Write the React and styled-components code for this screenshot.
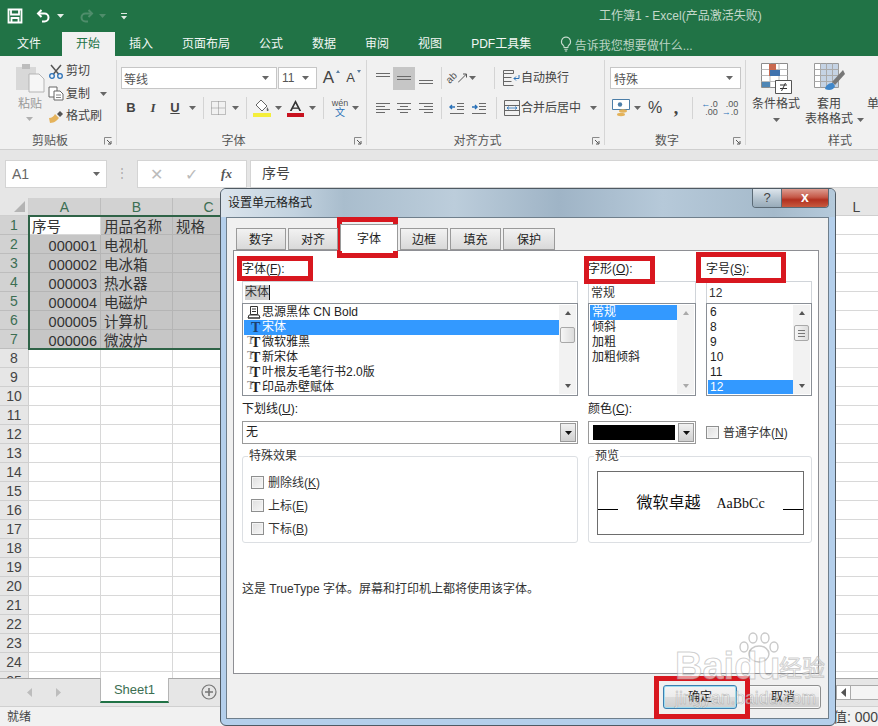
import React from "react";
import styled, { createGlobalStyle } from "styled-components";

const GlobalStyle = createGlobalStyle`
  html, body { margin: 0; padding: 0; background: #fff; }
  body {
    font-family: "Liberation Sans", "Noto Sans CJK SC", sans-serif;
    font-size: 12px;
  }
  * { box-sizing: border-box; }
`;

const GREEN = "#217346";

/* ---------- icons ---------- */

const Caret = ({ color = "#666" }) => (
  <svg width="7" height="4" viewBox="0 0 7 4"><path d="M0 0h7L3.500 4z" fill={color} /></svg>
);

const SideArrow = ({ dir, color }) => (
  <svg width="5" height="9" viewBox="0 0 5 9">
    <path d={dir === "left" ? "M5 0v9L0 4.500z" : "M0 0v9l5-4.500z"} fill={color} />
  </svg>
);

const SaveIcon = () => (
  <svg width="16" height="16" viewBox="0 0 16 16" fill="none" stroke="#fff" strokeWidth="1.8">
    <path d="M1.500 1.500h13v13h-13z" />
    <path d="M4 1.500v5h8v-5M4.500 14.500v-4.500h7v4.500" />
  </svg>
);

const UndoIcon = ({ color = "#fff" }) => (
  <svg width="16" height="14" viewBox="0 0 16 14" fill="none" stroke={color} strokeWidth="2">
    <path d="M5.500 1 2 4.500 5.500 8" />
    <path d="M2.500 4.500h6a4 4 0 0 1 0 8H6" />
  </svg>
);

const RedoIcon = ({ color }) => (
  <svg width="16" height="14" viewBox="0 0 16 14" fill="none" stroke={color} strokeWidth="2">
    <path d="M10.500 1 14 4.500 10.500 8" />
    <path d="M13.500 4.500h-6a4 4 0 0 0 0 8H10" />
  </svg>
);

const CustomizeIcon = () => (
  <svg width="8" height="8" viewBox="0 0 8 8" fill="#dfeae3">
    <path d="M1 1h6v1H1zM1 4h6L4 7.500z" />
  </svg>
);

const BulbIcon = () => (
  <svg width="12" height="16" viewBox="0 0 12 16" fill="none" stroke="#c9dcd0" strokeWidth="1.100">
    <path d="M6 1a4.600 4.600 0 0 0-2.800 8.200c.7.6.9 1.400.9 2.300h3.800c0-.9.2-1.700.9-2.300A4.600 4.600 0 0 0 6 1z" />
    <path d="M4.300 13.300h3.400M4.900 15h2.200" />
  </svg>
);

const PasteIcon = () => (
  <svg width="30" height="30" viewBox="0 0 30 30">
    <path d="M1 4h20v23H1z" fill="#d8d8d8" />
    <path d="M7 1h8v5H7z" fill="#bdbdbd" />
    <path d="M14 11h10l5 5v13H14z" fill="#f6f6f6" stroke="#b5b5b5" />
  </svg>
);

const ScissorsIcon = () => (
  <svg width="16" height="15" viewBox="0 0 16 15" fill="none">
    <path d="M3 1l7.500 9M13 1L5.500 10" stroke="#555" strokeWidth="1.500" />
    <circle cx="4" cy="12" r="2.300" stroke="#2a71b8" strokeWidth="1.300" />
    <circle cx="12" cy="12" r="2.300" stroke="#2a71b8" strokeWidth="1.300" />
  </svg>
);

const CopyIcon = () => (
  <svg width="16" height="15" viewBox="0 0 16 15" fill="#fff" stroke="#666">
    <path d="M1 1h8v10H1z" />
    <path d="M6 5h6l3 3v6H6z" />
    <path d="M8 9h5M8 11.500h5" strokeWidth=".8" />
  </svg>
);

const BrushIcon = () => (
  <svg width="17" height="15" viewBox="0 0 17 15">
    <path d="M1 9c3 0 5-2 6-4l4 4c-2 2-4 5-9 5z" fill="#e5b35c" />
    <path d="M8 4l3-3 3 3-3 3z" fill="#555" transform="translate(1 1)" />
  </svg>
);

const Launcher = () => (
  <svg width="8" height="8" viewBox="0 0 8 8" fill="none" stroke="#8a8a8a">
    <path d="M.5 7.500v-7h7" />
    <path d="M3 3l3.500 3.500M7 4v3H4" stroke="#555" />
  </svg>
);

const BorderIcon = () => (
  <svg width="15" height="14" viewBox="0 0 15 14" fill="none" stroke="#8a8a8a" strokeDasharray="1 1">
    <path d="M.5.5h14v13H.5zM7.500.5v13M.5 7h14" />
  </svg>
);

const FillIcon = () => (
  <svg width="18" height="18" viewBox="0 0 18 18">
    <path d="M8 1l6 6-5 5-6-6z" fill="#fff" stroke="#666" />
    <path d="M14 8c1 1.500 2 2.500 1.500 3.500s-2 .5-1.800-.8z" fill="#666" />
    <path d="M0 14h18v4H0z" fill="#f4ee3b" />
  </svg>
);

const FontColorIcon = () => (
  <svg width="17" height="18" viewBox="0 0 17 18">
    <path d="M2.800 12 8.500 1l5.700 11h-1.900L8.500 4.500 4.700 12z" fill="#333" />
    <path d="M5.500 8.500h6v1.300h-6z" fill="#333" />
    <path d="M0 14h17v4H0z" fill="#c8121f" />
  </svg>
);

// horizontal text lines used by the alignment and indent buttons
const TextLines = ({ lines, extra }) => (
  <svg width="16" height="14" viewBox="0 0 16 14" stroke="#6a6a6a" strokeWidth="1" fill="none">
    {lines.map(([a, b, y]) => (
      <path key={y} d={`M${a} ${y}.5H${b}`} />
    ))}
    {extra}
  </svg>
);

const OrientArrow = () => (
  <svg width="10" height="10" viewBox="0 0 10 10" fill="none" stroke="#555">
    <path d="M0 9.500 8.500 1M5 1h3.500v3.500" />
  </svg>
);

const WrapIcon = () => (
  <svg width="17" height="17" viewBox="0 0 17 17" fill="none" stroke="#666">
    <path d="M.5.500h10v3H.5zM.5 7.500h8M.5 11.500h8M.5 15.500h10M.5 3.500v12" />
    <path d="M16 5v3.500h-5M13 6.500l-2 2 2 2" stroke="#2a71b8" />
  </svg>
);

const MergeIcon = () => (
  <svg width="16" height="16" viewBox="0 0 16 16" fill="none" stroke="#666">
    <path d="M.5.500h15v15H.5zM.5 5.500h15M.5 10.500h15" />
    <path d="M3 8h10M5 6.500 3 8l2 1.500M11 6.500 13 8l-2 1.500" stroke="#2a71b8" strokeWidth=".8" />
  </svg>
);

const CurrencyIcon = () => (
  <svg width="18" height="18" viewBox="0 0 18 18">
    <path d="M.5.500h17v10H.5z" fill="#fff" stroke="#4c7ea8" />
    <circle cx="8" cy="5.500" r="2.200" fill="#4c7ea8" />
    <ellipse cx="11" cy="12" rx="4" ry="1.700" fill="#e3b25a" />
    <ellipse cx="9" cy="15.500" rx="4" ry="1.700" fill="#e3b25a" />
  </svg>
);

const CondFormatIcon = () => (
  <svg width="31" height="31" viewBox="0 0 31 31">
    <path d="M.5.500h26v24H.5z" fill="#fff" stroke="#8c8c8c" />
    <path d="M9 .5v24M18 .5v24M.5 6.500h26M.5 12.500h26M.5 18.500h26" stroke="#bbb" />
    <path d="M8 1h7v6H8zM8 7h4v6H8z" fill="#c9694f" />
    <path d="M9 7h10v6H9z" fill="#3f72ad" />
    <path d="M1 19h8v5H1z" fill="#4f86b5" />
    <path d="M14.500 17.500h16v13h-16z" fill="#fff" stroke="#555" />
    <path d="M19 22h7M19 25.500h7M24.500 20l-4 8" stroke="#333" fill="none" />
  </svg>
);

const TableFormatIcon = () => (
  <svg width="31" height="31" viewBox="0 0 31 31">
    <path d="M.5.500h24v24H.5z" fill="#fff" stroke="#999" />
    <path d="M6 1h18v23H6z" fill="#c5d3e4" />
    <path d="M.5 6.500h24M.5 12.500h24M.5 18.500h24M6.500.5v24M12.500.5v24M18.500.5v24" stroke="#aaa" />
    <path d="M29 7 18 19l3 3L31 11z" fill="#777" />
    <path d="M11 26c1-5 5-6 8-6l2 3c-1 4-6 5-10 3z" fill="#3f86c9" />
  </svg>
);

const GridCornerIcon = () => (
  <svg width="11" height="11" viewBox="0 0 11 11"><path d="M11 0v11H0z" fill="#b4b4b4" /></svg>
);

const PlusIcon = () => (
  <svg width="16" height="16" viewBox="0 0 16 16" fill="none" stroke="#777">
    <circle cx="8" cy="8" r="7" strokeWidth="1.200" />
    <path d="M8 4v8M4 8h8" strokeWidth="1.600" />
  </svg>
);

const FontFileIcon = () => (
  <svg width="14" height="13" viewBox="0 0 14 13" fill="none" stroke="#333">
    <path d="M3.500.5h7v8h-7zM1 12h12M2 9h10l1 3H1zM5 3h4M5 5.500h4" />
  </svg>
);

const PawIcon = () => (
  <svg width="42" height="32" viewBox="0 0 42 32" fill="none" stroke="#c9c9c9" strokeWidth="1.400">
    <ellipse cx="21" cy="22" rx="10" ry="8" />
    <ellipse cx="6" cy="15" rx="4" ry="5" />
    <ellipse cx="15" cy="6" rx="4" ry="5" />
    <ellipse cx="27" cy="6" rx="4" ry="5" />
    <ellipse cx="36" cy="15" rx="4" ry="5" />
  </svg>
);

/* ---------- window chrome ---------- */

const Page = styled.div`
  position: relative;
  width: 878px;
  height: 726px;
  overflow: hidden;
  display: flex;
  flex-direction: column;
  color: #444;
`;

const TitleBar = styled.div`
  height: 30px;
  background: ${GREEN};
  display: flex;
  align-items: center;
  padding: 2px 0 0 7px;
`;

const QuickBtn = styled.span`
  display: flex;
  align-items: center;
  justify-content: center;
  width: ${(p) => p.$w}px;
  margin-right: ${(p) => p.$mr || 0}px;
`;

const WindowTitle = styled.div`
  position: absolute;
  left: 599px;
  top: 8px;
  line-height: 16px;
  color: #c3d8ca;
  white-space: nowrap;
`;

const MenuBar = styled.div`
  height: 26px;
  background: ${GREEN};
  display: flex;
  align-items: flex-end;
  padding-left: 2.500px;
`;

const MenuTab = styled.div`
  height: 24px;
  padding: 0 14.500px;
  line-height: 24px;
  white-space: nowrap;
  color: ${(p) => (p.$active ? GREEN : "#f2f7f4")};
  background: ${(p) => (p.$active ? "#f1f1f1" : "transparent")};
  margin-right: ${(p) => p.$mr || 0}px;
`;

const TellMe = styled.div`
  display: flex;
  align-items: center;
  gap: 3px;
  height: 24px;
  margin-left: 14px;
  color: #bcd3c4;
`;

/* ---------- ribbon ---------- */

const Ribbon = styled.div`
  height: 94px;
  background: #f1f1f1;
  border-bottom: 1px solid #cfcfcf;
  display: flex;
  overflow: hidden;
`;

const Group = styled.div`
  flex: none;
  width: ${(p) => p.$w}px;
  display: flex;
  flex-direction: column;
  border-right: ${(p) => (p.$last ? "none" : "1px solid #d6d6d6")};
  margin: 4px 0 4px;
`;

const GroupBody = styled.div`
  flex: none;
  height: 74px;
  display: ${(p) => (p.$row ? "flex" : "block")};
  padding: ${(p) => p.$pad || "7px 0 0 0"};
`;

const GroupFooter = styled.div`
  flex: 1;
  display: flex;
  align-items: center;
`;

const GroupLabel = styled.span`
  flex: 1;
  text-align: center;
  line-height: 14px;
  color: #555;
`;

const LauncherBox = styled.span`
  width: 16px;
  display: flex;
  padding-left: 4px;
`;

const ToolRow = styled.div`
  display: flex;
  align-items: center;
  height: 22px;
  padding-left: ${(p) => p.$pl || 0}px;
  margin-top: ${(p) => p.$mt || 0}px;
`;

const Tool = styled.span`
  flex: none;
  width: ${(p) => p.$w}px;
  height: ${(p) => (p.$active ? "23px" : "auto")};
  display: flex;
  align-items: center;
  justify-content: center;
  background: ${(p) => (p.$active ? "#c6c6c6" : "transparent")};
  color: #444;
  font: ${(p) => p.$font || "inherit"};
  line-height: 16px;
`;

const SizeTool = styled(Tool)`
  position: relative;
  &::after {
    content: "";
    position: absolute;
    top: 0;
    right: ${(p) => p.$arrowRight}px;
    border-left: 2.500px solid transparent;
    border-right: 2.500px solid transparent;
    ${(p) => (p.$shrink ? "border-top" : "border-bottom")}: 3px solid #5b7fa3;
  }
`;

const ToolSep = styled.span`
  flex: none;
  width: ${(p) => p.$w}px;
  height: 22px;
  display: flex;
  justify-content: center;
  &::before {
    content: "";
    width: 1px;
    background: #d4d4d4;
  }
`;

const ToolText = styled.span`
  white-space: nowrap;
  color: #444;
  line-height: 16px;
`;

const ComboBox = styled.div`
  flex: none;
  width: ${(p) => p.$w}px;
  height: 22px;
  background: #fff;
  border: 1px solid #c6c6c6;
  display: flex;
  align-items: center;
  justify-content: space-between;
  padding: 0 7px 0 ${(p) => p.$pl || 2}px;
  color: #555;
  margin-right: ${(p) => p.$mr || 0}px;
`;

const PasteButton = styled.div`
  width: 42px;
  padding-left: 4px;
  display: flex;
  flex-direction: column;
  align-items: center;
  color: #9a9a9a;
  line-height: 16px;
`;

const PasteLabel = styled.span`
  margin-top: 3px;
`;

const PasteCaret = styled.span`
  display: flex;
  margin-top: 5px;
`;

const SmallColumn = styled.div`
  margin-left: 0;
  margin-top: -3px;
  display: flex;
  flex-direction: column;
`;

const SmallAction = styled.div`
  height: 22.500px;
  display: flex;
  align-items: center;
`;

const ActionIcon = styled.span`
  width: 18px;
  display: flex;
`;

const BigButton = styled.div`
  flex: none;
  width: ${(p) => p.$w}px;
  display: flex;
  flex-direction: column;
  align-items: center;
  color: #444;
  line-height: 15px;
  white-space: nowrap;
`;

const BigIcon = styled.span`
  height: 33px;
  margin-bottom: 1px;
  display: flex;
`;

const BigCaret = styled.span`
  height: 15px;
  display: flex;
  align-items: center;
`;

const BigLine = styled.span`
  display: flex;
  align-items: center;
  & svg {
    margin: 0 -11px 0 4px;
  }
`;

const Wen = styled.span`
  display: flex;
  flex-direction: column;
  align-items: center;
  font-size: 9px;
  line-height: 9px;
  color: #555;
  & b {
    font-weight: 400;
    font-size: 10px;
    line-height: 9px;
    color: #2a71b8;
  }
`;

const OrientText = styled.span`
  display: block;
  transform: rotate(-45deg);
  font-size: 10px;
  line-height: 10px;
  color: #555;
`;

const TinyDigits = styled.span`
  display: flex;
  flex-direction: column;
  font-size: 9px;
  line-height: 8px;
  text-align: right;
  color: #555;
  & i {
    font-style: normal;
    color: #2a71b8;
  }
`;

/* ---------- formula bar ---------- */

const FormulaBar = styled.div`
  height: 48px;
  background: #e6e6e6;
  padding: 10px 0 10px 5px;
  display: flex;
`;

const NameBox = styled.div`
  width: 102px;
  background: #fff;
  border: 1px solid #d4d4d4;
  display: flex;
  align-items: center;
  justify-content: space-between;
  padding: 0 6px;
  font-size: 14px;
  color: #666;
`;

const Dots = styled.div`
  width: 30px;
  text-align: center;
  color: #aaa;
  line-height: 26px;
`;

const FormulaButtons = styled.div`
  width: 110px;
  background: #fff;
  border: 1px solid #d4d4d4;
  display: flex;
  align-items: center;
  padding-left: 1px;
`;

const FormulaBtn = styled.span`
  width: 35px;
  text-align: center;
  color: ${(p) => p.$color || "#bbb"};
  font: ${(p) => p.$font || "16px 'Liberation Sans', sans-serif"};
`;

const FormulaInput = styled.div`
  flex: 1;
  margin-left: 3px;
  background: #fff;
  border: 1px solid #d4d4d4;
  border-right: none;
  padding-left: 11px;
  font-size: 14px;
  line-height: 25px;
  color: #444;
`;

/* ---------- sheet ---------- */

const SheetWrap = styled.div`
  position: relative;
  flex: 1;
  overflow: hidden;
  background: #fff;
`;

const SheetGrid = styled.div`
  display: grid;
  grid-template-columns: 29px repeat(12, 72px);
  grid-template-rows: 18px repeat(25, 19px);
`;

const HeaderCell = styled.div`
  background: ${(p) => (p.$selected ? "#d2d2d2" : "#e6e6e6")};
  color: ${(p) => (p.$selected ? "#3c6e52" : "#444")};
  border-right: 1px solid ${(p) => (p.$selected ? "#bdbdbd" : "#cfcfcf")};
  border-bottom: 1px solid ${(p) => (p.$selected ? "#bdbdbd" : "#cfcfcf")};
  display: flex;
  align-items: center;
  justify-content: center;
  font-size: 14px;
`;

const CornerCell = styled(HeaderCell)`
  align-items: flex-end;
  justify-content: flex-end;
  padding: 0 3px 3px 0;
`;

const Cell = styled.div`
  border-right: 1px solid ${(p) => (p.$selected ? "#b5b5b5" : "#d8d8d8")};
  border-bottom: 1px solid ${(p) => (p.$selected ? "#b5b5b5" : "#d8d8d8")};
  background: ${(p) => (p.$selected ? "#c6c6c6" : "#fff")};
  font-size: 14.500px;
  line-height: 22px;
  padding: 0 3px;
  color: #333;
  white-space: nowrap;
  text-align: ${(p) => (p.$right ? "right" : "left")};
`;

const SelectionFrame = styled.div`
  position: absolute;
  left: 28px;
  top: 17px;
  width: 290px;
  height: 135px;
  border: 2px solid #2f6347;
  pointer-events: none;
`;

const SheetBar = styled.div`
  height: 28px;
  background: #e6e6e6;
  border-top: 1px solid #a8a8a8;
  display: flex;
  padding-left: 15px;
`;

const SheetNav = styled.span`
  width: 29px;
  height: 26px;
  display: flex;
  align-items: center;
  justify-content: center;
`;

const SheetTab = styled.div`
  width: 69px;
  height: 25px;
  margin: -1px 0 0 27px;
  background: #fff;
  border-left: 1px solid #b5b5b5;
  border-right: 1px solid #b5b5b5;
  border-bottom: 2px solid ${GREEN};
  text-align: center;
  font-size: 13px;
  line-height: 24px;
  color: #3c6e52;
`;

const AddSheet = styled.span`
  margin-left: 32px;
  height: 26px;
  display: flex;
  align-items: center;
`;

const HScroll = styled.div`
  margin-left: auto;
  width: 42px;
  height: 15px;
  margin-top: 6px;
  background: #f4f4f4;
  border: 1px solid #aaa;
  border-right: none;
  display: flex;
`;

const HScrollArrow = styled.span`
  width: 14px;
  border-right: 1px solid #aaa;
  display: flex;
  align-items: center;
  justify-content: center;
  background: #fff;
`;

const StatusBar = styled.div`
  height: 20px;
  background: #f1f1f1;
  border-top: 1px solid #d0d0d0;
  display: flex;
  align-items: center;
  justify-content: space-between;
  padding-left: 7px;
  line-height: 16px;
  color: #444;
`;

const StatusValue = styled.span`
  width: 73px;
  overflow: hidden;
  white-space: nowrap;
  font-size: 14px;
`;

/* ---------- dialog ---------- */

const Dialog = styled.div`
  position: absolute;
  left: 220px;
  top: 188px;
  width: 616px;
  height: 538px;
  border: 1px solid #4f5a63;
  border-radius: 6px;
  background: #b4cfeb;
  padding: 0 6px 6px 5px;
  display: flex;
  flex-direction: column;
  color: #222;
`;

const DialogTitle = styled.div`
  height: 28px;
  margin: 0 -6px 0 -5px;
  padding-left: 7px;
  border-radius: 5px 5px 0 0;
  background: linear-gradient(90deg, #dbe4ec 0, #c2d2df 12%, #a9bdcd 20%, #bccddb 38%, #9fb4c6 55%, #b6c9d9 72%, #a5bacb 90%, #b5cadb 100%);
  display: flex;
  align-items: center;
  justify-content: space-between;
  line-height: 16px;
`;

const CaptionButtons = styled.div`
  align-self: flex-start;
  margin-right: 6px;
  display: flex;
  height: 19px;
  border: 1px solid #5b6a76;
  border-top: none;
  border-radius: 0 0 4px 4px;
  overflow: hidden;
`;

const HelpButton = styled.span`
  width: 29px;
  background: linear-gradient(#dde5ec, #b3c2ce 55%, #98abb9);
  border-right: 1px solid #5b6a76;
  text-align: center;
  font-size: 13px;
  line-height: 18px;
  color: #444;
`;

const CloseButton = styled.span`
  width: 46px;
  background: linear-gradient(#dd9c90, #c65a49 45%, #b2301f 60%, #c75a3f);
  text-align: center;
  font-weight: 700;
  font-size: 14px;
  line-height: 17px;
  color: #fff;
`;

const DialogClient = styled.div`
  flex: 1;
  background: #f0f0f0;
  border: 1px solid #6f7f8c;
  padding: 10px 9px 0 6px;
  display: flex;
  flex-direction: column;
`;

const TabStrip = styled.div`
  height: 22px;
  display: flex;
  align-items: flex-end;
  gap: 2px;
  padding-left: 3px;
  position: relative;
  z-index: 1;
`;

const DialogTab = styled.div`
  width: ${(p) => p.$w}px;
  height: ${(p) => (p.$active ? "27px" : "22px")};
  margin-bottom: ${(p) => (p.$active ? "-1px" : "0")};
  padding-top: ${(p) => (p.$active ? "4px" : "1px")};
  background: ${(p) => (p.$active ? "#fff" : "linear-gradient(#f2f2f2, #d9d9d9)")};
  border: 1px solid #9a9a9a;
  border-bottom: ${(p) => (p.$active ? "none" : "1px solid #9a9a9a")};
  text-align: center;
  line-height: 20px;
`;

const TabPanel = styled.div`
  height: 424px;
  background: #fff;
  border: 1px solid #8e8f94;
  padding: 11px 6px 0 8px;
`;

const FieldGrid = styled.div`
  display: grid;
  grid-template-columns: 336px 108px 106px;
  column-gap: 10px;
  margin-top: ${(p) => p.$mt || 0}px;
`;

const FieldLabel = styled.div`
  line-height: 14px;
  margin-bottom: 5px;
  white-space: nowrap;
`;

const TextInput = styled.div`
  height: 22px;
  border: 1px solid #d0d4d9;
  border-bottom: none;
  padding-left: 2px;
  line-height: 20px;
  color: #333;
  display: flex;
  align-items: center;
`;

const SelectedText = styled.span`
  background: #cfcfcf;
  line-height: 15px;
  border-right: 1px solid #111;
`;

const ListBox = styled.div`
  height: 93px;
  border: 1px solid #8a8f96;
  padding: 1px;
  display: flex;
`;

const ListItems = styled.div`
  flex: 1;
  min-width: 0;
  overflow: hidden;
`;

const ListItem = styled.div`
  height: 15px;
  line-height: 15px;
  padding-left: 2px;
  display: flex;
  align-items: center;
  white-space: nowrap;
  background: ${(p) => (p.$selected ? "#3399ff" : "transparent")};
  color: ${(p) => (p.$selected ? "#fff" : "#222")};
`;

const FontIconBox = styled.span`
  width: 15px;
  margin-left: 1px;
  display: flex;
  justify-content: flex-start;
`;

const TrueTypeIcon = styled.span`
  position: relative;
  width: 14px;
  font: 700 14px/15px "Liberation Serif", serif;
  color: ${(p) => (p.$solid ? "#1d3f6e" : "#222")};
  padding-left: 4px;
  &::before {
    content: ${(p) => (p.$solid ? '""' : '"T"')};
    position: absolute;
    left: 0;
    top: -2px;
    font-weight: 400;
    font-size: 12px;
    color: #888;
  }
`;

const ListScroll = styled.div`
  flex: none;
  width: 17px;
  background: #f2f2f2;
  display: flex;
  flex-direction: column;
  align-items: center;
  justify-content: space-between;
  padding: 6px 0;
  position: relative;
`;

const ScrollThumb = styled.span`
  position: absolute;
  left: 1px;
  top: ${(p) => p.$top}px;
  width: 15px;
  height: 16px;
  background: linear-gradient(90deg, #f6f6f6, #dcdcdc);
  border: 1px solid #a8a8a8;
  border-radius: 2px;
  &::after {
    content: "";
    display: ${(p) => (p.$grip ? "block" : "none")};
    margin: 4px auto 0;
    width: 7px;
    height: 5px;
    border-top: 1px solid #777;
    border-bottom: 1px solid #777;
    background: linear-gradient(#777, #777) center / 100% 1px no-repeat;
  }
`;

const ScrollArrow = styled.span`
  width: 0;
  height: 0;
  border-left: 3.500px solid transparent;
  border-right: 3.500px solid transparent;
  ${(p) => (p.$down ? "border-top" : "border-bottom")}: 4px solid ${(p) => (p.$dim ? "#aaa" : "#555")};
`;

const DropDown = styled.div`
  height: 23px;
  border: 1px solid #9a9a9a;
  padding: 1px;
  display: flex;
  align-items: stretch;
  line-height: 19px;
`;

const DropValue = styled.div`
  flex: 1;
  padding-left: 2px;
`;

const ColorSwatch = styled.div`
  flex: 1;
  margin: 2px 3px;
  background: #000;
`;

const DropButton = styled.span`
  width: 16px;
  background: linear-gradient(#f1f1f1, #d0d0d0);
  border: 1px solid #999;
  display: flex;
  align-items: center;
  justify-content: center;
`;

const CheckRow = styled.div`
  height: ${(p) => p.$h || 23}px;
  display: flex;
  align-items: center;
  gap: 4px;
  line-height: 14px;
  white-space: nowrap;
  color: #333;
`;

const CheckBox = styled.span`
  width: 13px;
  height: 13px;
  flex: none;
  border: 1px solid #8e8f8f;
  background: linear-gradient(135deg, #dedede, #f7f7f7);
  box-shadow: inset 0 0 0 1px #f4f4f4;
`;

const GroupBox = styled.fieldset`
  margin: 5px 0 0;
  height: 94px;
  min-width: 0;
  border: 1px solid #dcdfe3;
  border-radius: 3px;
  padding: ${(p) => p.$pad};
  grid-column: ${(p) => p.$span || "auto"};
  & legend {
    padding: 0 1px;
    margin-left: -3px;
    line-height: 14px;
    color: #333;
  }
`;

const PreviewBox = styled.div`
  width: 207px;
  height: 64px;
  border: 1px solid #6d6d6d;
  display: flex;
  align-items: center;
`;

const BaseLine = styled.span`
  flex: none;
  width: 20px;
  height: 1px;
  margin-top: 12px;
  background: #000;
`;

const PreviewText = styled.span`
  flex: 1;
  text-align: center;
  white-space: nowrap;
  font-size: 16px;
  line-height: 20px;
  color: #111;
  & em {
    font: 14px "Liberation Serif", serif;
    margin-left: 16px;
  }
`;

const InfoLine = styled.div`
  margin-top: 39px;
  line-height: 14px;
  color: #333;
  white-space: nowrap;
`;

const DialogButtons = styled.div`
  display: flex;
  justify-content: flex-end;
  gap: 8px;
  margin: 11px -2px 0 0;
`;

const PushButton = styled.div`
  width: ${(p) => p.$w}px;
  height: 24px;
  text-align: center;
  line-height: 22px;
  color: #222;
  border-radius: 3px;
  border: 1px solid ${(p) => (p.$primary ? "#3c7fb1" : "#8e8f8f")};
  background: linear-gradient(#f4f4f4 0, #ececec 48%, #dcdcdc 50%, #cfcfcf 100%);
  box-shadow: ${(p) => (p.$primary ? "inset 0 0 0 1px #9fdcf0" : "inset 0 0 0 1px #f8f8f8")};
`;

/* ---------- annotations drawn over the screenshot ---------- */

const RedBox = styled.div`
  position: absolute;
  left: ${(p) => p.$x}px;
  top: ${(p) => p.$y}px;
  width: ${(p) => p.$w}px;
  height: ${(p) => p.$h}px;
  border: 5px solid #d8171f;
  pointer-events: none;
`;

const Watermark = styled.div`
  position: absolute;
  left: 674px;
  top: 630px;
  width: 156px;
  height: 80px;
  pointer-events: none;
  color: rgba(255, 255, 255, 0.55);
  -webkit-text-stroke: 1px rgba(150, 150, 150, 0.45);
  white-space: nowrap;
`;

const WatermarkPaw = styled.span`
  position: absolute;
  left: 64px;
  top: 2px;
  display: flex;
`;

const WatermarkBrand = styled.span`
  position: absolute;
  left: 1px;
  top: 16px;
  font-size: 38px;
  font-weight: 700;
  line-height: 40px;
`;

const WatermarkWord = styled.span`
  position: absolute;
  left: 105px;
  top: 24px;
  font-size: 23px;
  line-height: 28px;
`;

const WatermarkUrl = styled.span`
  position: absolute;
  left: 1px;
  top: 57px;
  font-size: 17.500px;
  line-height: 22px;
  -webkit-text-stroke: 0.6px rgba(130, 130, 130, 0.5);
`;

/* ---------- data ---------- */

const menus = ["插入", "页面布局", "公式", "数据", "审阅", "视图", "PDF工具集"];
const columns = ["A", "B", "C", "D", "E", "F", "G", "H", "I", "J", "K", "L"];
const items = [
  ["序号", "用品名称", "规格"],
  ["000001", "电视机"],
  ["000002", "电冰箱"],
  ["000003", "热水器"],
  ["000004", "电磁炉"],
  ["000005", "计算机"],
  ["000006", "微波炉"],
];
const fontList = ["宋体", "微软雅黑", "新宋体", "叶根友毛笔行书2.0版", "印品赤壁赋体"];
const styleList = ["常规", "倾斜", "加粗", "加粗倾斜"];
const sizeList = ["6", "8", "9", "10", "11", "12"];
const dialogTabs = [["数字", 50], ["对齐", 50], ["字体", 58], ["边框", 48], ["填充", 51], ["保护", 52]];

const Sheet = () => {
  const cells = [];
  for (let r = 1; r <= 25; r++) {
    const selectedRow = r <= 7;
    cells.push(<HeaderCell key={`h${r}`} $selected={selectedRow}>{r}</HeaderCell>);
    columns.forEach((c, i) => {
      const row = items[r - 1] || [];
      const selected = selectedRow && i < 4 && !(r === 1 && i === 0);
      cells.push(
        <Cell key={`${c}${r}`} $selected={selected} $right={r > 1 && i === 0}>
          {row[i]}
        </Cell>
      );
    });
  }
  return (
    <SheetWrap>
      <SheetGrid>
        <CornerCell><GridCornerIcon /></CornerCell>
        {columns.map((c, i) => (
          <HeaderCell key={c} $selected={i < 4}>{c}</HeaderCell>
        ))}
        {cells}
      </SheetGrid>
      <SelectionFrame />
    </SheetWrap>
  );
};

const FontDialog = () => (
  <Dialog>
    <DialogTitle>
      设置单元格格式
      <CaptionButtons>
        <HelpButton>?</HelpButton>
        <CloseButton>x</CloseButton>
      </CaptionButtons>
    </DialogTitle>
    <DialogClient>
      <TabStrip>
        {dialogTabs.map(([t, w]) => (
          <DialogTab key={t} $w={w} $active={t === "字体"}>{t}</DialogTab>
        ))}
      </TabStrip>
      <TabPanel>
        <FieldGrid>
          <div>
            <FieldLabel>字体(<u>F</u>):</FieldLabel>
            <TextInput><SelectedText>宋体</SelectedText></TextInput>
            <ListBox>
              <ListItems>
                <ListItem>
                  <FontIconBox><FontFileIcon /></FontIconBox>思源黑体 CN Bold
                </ListItem>
                {fontList.map((f, i) => (
                  <ListItem key={f} $selected={i === 0}>
                    <FontIconBox><TrueTypeIcon $solid={i === 0}>T</TrueTypeIcon></FontIconBox>{f}
                  </ListItem>
                ))}
              </ListItems>
              <ListScroll>
                <ScrollArrow />
                <ScrollThumb $top={22} />
                <ScrollArrow $down />
              </ListScroll>
            </ListBox>
          </div>
          <div>
            <FieldLabel>字形(<u>O</u>):</FieldLabel>
            <TextInput>常规</TextInput>
            <ListBox>
              <ListItems>
                {styleList.map((s, i) => (
                  <ListItem key={s} $selected={i === 0}>{s}</ListItem>
                ))}
              </ListItems>
              <ListScroll>
                <ScrollArrow $dim />
                <ScrollArrow $down $dim />
              </ListScroll>
            </ListBox>
          </div>
          <div>
            <FieldLabel>字号(<u>S</u>):</FieldLabel>
            <TextInput>12</TextInput>
            <ListBox>
              <ListItems>
                {sizeList.map((s) => (
                  <ListItem key={s} $selected={s === "12"}>{s}</ListItem>
                ))}
              </ListItems>
              <ListScroll>
                <ScrollArrow />
                <ScrollThumb $top={20} $grip />
                <ScrollArrow $down />
              </ListScroll>
            </ListBox>
          </div>
        </FieldGrid>
        <FieldGrid $mt={6}>
          <div>
            <FieldLabel>下划线(<u>U</u>):</FieldLabel>
            <DropDown>
              <DropValue>无</DropValue>
              <DropButton><Caret color="#111" /></DropButton>
            </DropDown>
          </div>
          <div>
            <FieldLabel>颜色(<u>C</u>):</FieldLabel>
            <DropDown>
              <ColorSwatch />
              <DropButton><Caret color="#111" /></DropButton>
            </DropDown>
          </div>
          <div>
            <FieldLabel>&nbsp;</FieldLabel>
            <CheckRow>
              <CheckBox /><span>普通字体(<u>N</u>)</span>
            </CheckRow>
          </div>
        </FieldGrid>
        <FieldGrid>
          <GroupBox $pad="8px 0 0 8px">
            <legend>特殊效果</legend>
            <CheckRow><CheckBox /><span>删除线(<u>K</u>)</span></CheckRow>
            <CheckRow><CheckBox /><span>上标(<u>E</u>)</span></CheckRow>
            <CheckRow><CheckBox /><span>下标(<u>B</u>)</span></CheckRow>
          </GroupBox>
          <GroupBox $pad="8px 0 0 8px" $span="span 2">
            <legend>预览</legend>
            <PreviewBox>
              <BaseLine />
              <PreviewText>微软卓越<em>AaBbCc</em></PreviewText>
              <BaseLine />
            </PreviewBox>
          </GroupBox>
        </FieldGrid>
        <InfoLine>这是 TrueType 字体。屏幕和打印机上都将使用该字体。</InfoLine>
      </TabPanel>
      <DialogButtons>
        <PushButton $w={74} $primary>确定</PushButton>
        <PushButton $w={76}>取消</PushButton>
      </DialogButtons>
    </DialogClient>
  </Dialog>
);

export default function App() {
  return (
    <Page>
      <GlobalStyle />
      <TitleBar>
        <QuickBtn $w={16} $mr={13}><SaveIcon /></QuickBtn>
        <QuickBtn $w={16} $mr={3}><UndoIcon /></QuickBtn>
        <QuickBtn $w={10} $mr={13}><Caret color="#e6efe9" /></QuickBtn>
        <QuickBtn $w={16} $mr={3}><RedoIcon color="#4f8d6b" /></QuickBtn>
        <QuickBtn $w={10} $mr={13}><Caret color="#4f8d6b" /></QuickBtn>
        <QuickBtn $w={8}><CustomizeIcon /></QuickBtn>
      </TitleBar>
      <WindowTitle>工作簿1 - Excel(产品激活失败)</WindowTitle>

      <MenuBar>
        <MenuTab $mr={6}>文件</MenuTab>
        <MenuTab $active>开始</MenuTab>
        {menus.map((m) => (
          <MenuTab key={m}>{m}</MenuTab>
        ))}
        <TellMe><BulbIcon />告诉我您想要做什么...</TellMe>
      </MenuBar>

      <Ribbon>
        <Group $w={117}>
          <GroupBody $row $pad="3px 0 0 8px">
            <PasteButton>
              <PasteIcon />
              <PasteLabel>粘贴</PasteLabel>
              <PasteCaret><Caret color="#b0b0b0" /></PasteCaret>
            </PasteButton>
            <SmallColumn>
              <SmallAction><ActionIcon><ScissorsIcon /></ActionIcon><ToolText>剪切</ToolText></SmallAction>
              <SmallAction><ActionIcon><CopyIcon /></ActionIcon><ToolText>复制</ToolText><Tool $w={26}><Caret /></Tool></SmallAction>
              <SmallAction><ActionIcon><BrushIcon /></ActionIcon><ToolText>格式刷</ToolText></SmallAction>
            </SmallColumn>
          </GroupBody>
          <GroupFooter><GroupLabel>剪贴板</GroupLabel><LauncherBox><Launcher /></LauncherBox></GroupFooter>
        </Group>

        <Group $w={250}>
          <GroupBody>
            <ToolRow $pl={4}>
              <ComboBox $w={156} $mr={1}>等线<Caret /></ComboBox>
              <ComboBox $w={39} $pl={3}>11<Caret /></ComboBox>
              <SizeTool $w={23} $arrowRight={0} $font="17px 'Liberation Sans', sans-serif">A</SizeTool>
              <SizeTool $w={21} $arrowRight={0} $shrink $font="13px 'Liberation Sans', sans-serif">A</SizeTool>
            </ToolRow>
            <ToolRow $pl={3} $mt={8}>
              <Tool $w={22} $font="700 13px 'Liberation Sans', sans-serif">B</Tool>
              <Tool $w={22} $font="italic 700 13px 'Liberation Serif', serif">I</Tool>
              <Tool $w={22} $font="700 13px 'Liberation Sans', sans-serif"><u>U</u></Tool>
              <Tool $w={12}><Caret /></Tool>
              <ToolSep $w={10} />
              <Tool $w={20}><BorderIcon /></Tool>
              <Tool $w={14}><Caret /></Tool>
              <ToolSep $w={8} />
              <Tool $w={24}><FillIcon /></Tool>
              <Tool $w={8}><Caret /></Tool>
              <Tool $w={26}><FontColorIcon /></Tool>
              <Tool $w={8}><Caret /></Tool>
              <ToolSep $w={14} />
              <Tool $w={20}><Wen>wén<b>文</b></Wen></Tool>
              <Tool $w={10}><Caret /></Tool>
            </ToolRow>
          </GroupBody>
          <GroupFooter><GroupLabel>字体</GroupLabel><LauncherBox><Launcher /></LauncherBox></GroupFooter>
        </Group>

        <Group $w={238}>
          <GroupBody>
            <ToolRow $pl={5}>
              <Tool $w={21}><TextLines lines={[[1, 15, 2], [1, 15, 5]]} /></Tool>
              <Tool $w={22} $active><TextLines lines={[[1, 15, 5], [1, 15, 8]]} /></Tool>
              <Tool $w={21}><TextLines lines={[[1, 15, 9], [1, 15, 12]]} /></Tool>
              <ToolSep $w={10} />
              <Tool $w={22}><OrientText>ab</OrientText><OrientArrow /></Tool>
              <Tool $w={8}><Caret /></Tool>
              <Tool $w={10} />
              <ToolSep $w={16} />
              <Tool $w={19}><WrapIcon /></Tool>
              <ToolText>自动换行</ToolText>
            </ToolRow>
            <ToolRow $pl={5} $mt={8}>
              <Tool $w={21}><TextLines lines={[[1, 15, 2], [1, 10, 5], [1, 15, 8], [1, 10, 11]]} /></Tool>
              <Tool $w={22}><TextLines lines={[[1, 15, 2], [4, 12, 5], [1, 15, 8], [4, 12, 11]]} /></Tool>
              <Tool $w={21}><TextLines lines={[[1, 15, 2], [6, 15, 5], [1, 15, 8], [6, 15, 11]]} /></Tool>
              <ToolSep $w={10} />
              <Tool $w={22}>
                <TextLines
                  lines={[[8, 15, 2], [8, 15, 5], [8, 15, 8], [1, 15, 12]]}
                  extra={<path d="M6 6H1M3 4 1 6l2 2" stroke="#2a71b8" strokeWidth="1.400" />}
                />
              </Tool>
              <Tool $w={22}>
                <TextLines
                  lines={[[8, 15, 2], [8, 15, 5], [8, 15, 8], [1, 15, 12]]}
                  extra={<path d="M1 6h5M4 4l2 2-2 2" stroke="#2a71b8" strokeWidth="1.400" />}
                />
              </Tool>
              <ToolSep $w={12} />
              <Tool $w={19}><MergeIcon /></Tool>
              <ToolText>合并后居中</ToolText>
              <Tool $w={24}><Caret /></Tool>
            </ToolRow>
          </GroupBody>
          <GroupFooter><GroupLabel>对齐方式</GroupLabel><LauncherBox><Launcher /></LauncherBox></GroupFooter>
        </Group>

        <Group $w={141}>
          <GroupBody>
            <ToolRow $pl={5}>
              <ComboBox $w={131} $pl={3}>特殊<Caret /></ComboBox>
            </ToolRow>
            <ToolRow $pl={5} $mt={8}>
              <Tool $w={22}><CurrencyIcon /></Tool>
              <Tool $w={10}><Caret /></Tool>
              <Tool $w={26} $font="16px 'Liberation Sans', sans-serif">%</Tool>
              <Tool $w={16} $font="700 18px 'Liberation Serif', serif">,</Tool>
              <ToolSep $w={16} />
              <Tool $w={19}><TinyDigits><span><i>←</i>.0</span><span>.00</span></TinyDigits></Tool>
              <Tool $w={22}><TinyDigits><span>.00</span><span><i>→</i>.0</span></TinyDigits></Tool>
            </ToolRow>
          </GroupBody>
          <GroupFooter><GroupLabel>数字</GroupLabel><LauncherBox><Launcher /></LauncherBox></GroupFooter>
        </Group>

        <Group $w={188} $last>
          <GroupBody $row $pad="3px 0 0 4px">
            <BigButton $w={52}>
              <BigIcon><CondFormatIcon /></BigIcon>
              条件格式
              <BigCaret><Caret /></BigCaret>
            </BigButton>
            <BigButton $w={54}>
              <BigIcon><TableFormatIcon /></BigIcon>
              套用
              <BigLine>表格格式<Caret /></BigLine>
            </BigButton>
            <Tool $w={14} />
            <BigButton $w={54}>
              <BigIcon />
              单元格样式
            </BigButton>
          </GroupBody>
          <GroupFooter><GroupLabel>样式</GroupLabel></GroupFooter>
        </Group>
      </Ribbon>

      <FormulaBar>
        <NameBox>A1<Caret /></NameBox>
        <Dots>⋮</Dots>
        <FormulaButtons>
          <FormulaBtn>✕</FormulaBtn>
          <FormulaBtn>✓</FormulaBtn>
          <FormulaBtn $color="#555" $font="italic 700 13px 'Liberation Serif', serif">fx</FormulaBtn>
        </FormulaButtons>
        <FormulaInput>序号</FormulaInput>
      </FormulaBar>

      <Sheet />

      <SheetBar>
        <SheetNav><SideArrow dir="left" color="#bdbdbd" /></SheetNav>
        <SheetNav><SideArrow dir="right" color="#bdbdbd" /></SheetNav>
        <SheetTab>Sheet1</SheetTab>
        <AddSheet><PlusIcon /></AddSheet>
        <HScroll><HScrollArrow><SideArrow dir="left" color="#555" /></HScrollArrow></HScroll>
      </SheetBar>
      <StatusBar>
        就绪
        <StatusValue>平均值: 000003</StatusValue>
      </StatusBar>

      <FontDialog />

      <RedBox $x={337} $y={217} $w={61} $h={41} />
      <RedBox $x={237} $y={256} $w={76} $h={25} />
      <RedBox $x={584} $y={256} $w={71} $h={28} />
      <RedBox $x={696} $y={252} $w={90} $h={31} />
      <RedBox $x={654} $y={676} $w={96} $h={43} />

      <Watermark>
        <WatermarkPaw><PawIcon /></WatermarkPaw>
        <WatermarkBrand>Baidu</WatermarkBrand>
        <WatermarkWord>经验</WatermarkWord>
        <WatermarkUrl>jingyan.baidu.com</WatermarkUrl>
      </Watermark>
    </Page>
  );
}
